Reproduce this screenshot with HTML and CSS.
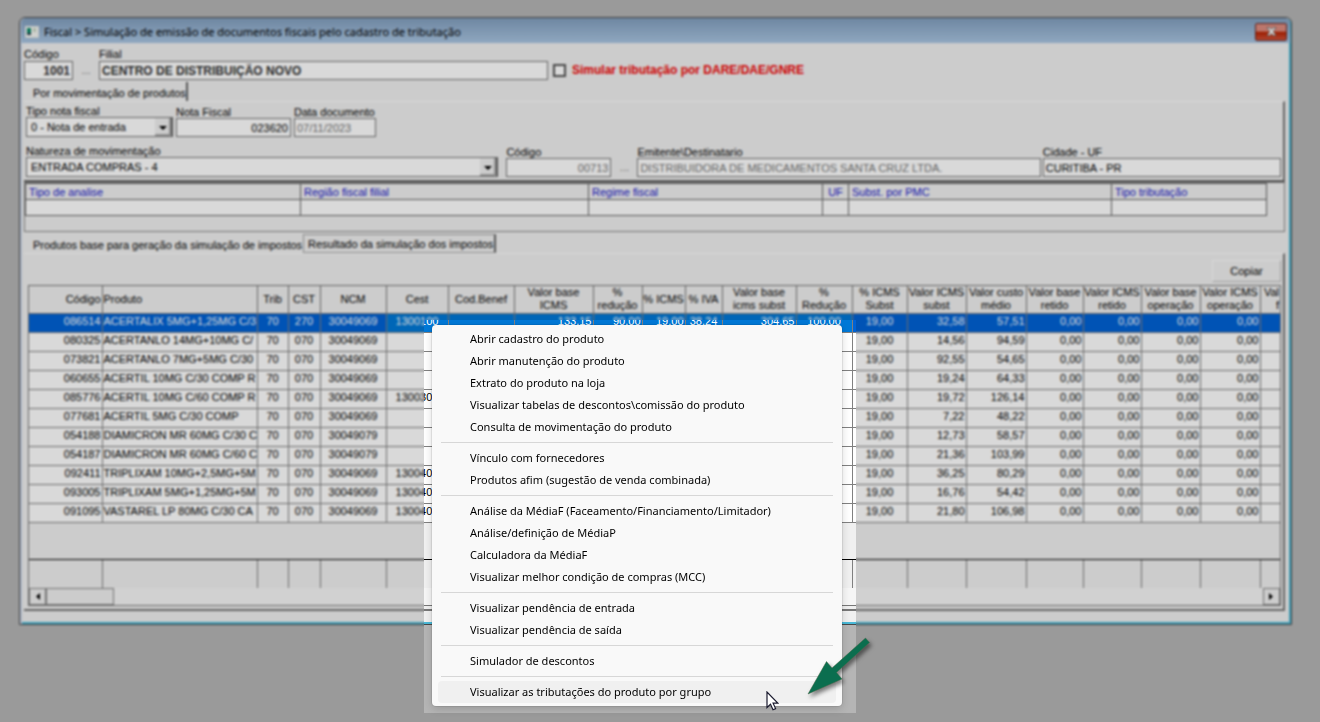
FILE: index.html
```html
<!DOCTYPE html>
<html lang="pt-BR">
<head>
<meta charset="utf-8">
<title>Fiscal - Simulação de emissão de documentos fiscais</title>
<link rel="stylesheet" href="styles.css">
</head>
<body>
<main class="desktop">
  <section class="window">
    <header class="titlebar">
      <svg class="app-icon" width="14" height="12" viewBox="0 0 14 12"><rect x="0" y="0" width="14" height="12" fill="#dfe6e6"/><rect x="1" y="1" width="12" height="10" fill="#f4f6f2"/><rect x="2" y="2" width="4" height="7" fill="#0f8a6a"/><rect x="2" y="7" width="4" height="2" fill="#345"/><rect x="8" y="2" width="3" height="4" fill="#c9d6c4"/></svg>
      <h1 class="title">Fiscal &gt; Simulação de emissão de documentos fiscais pelo cadastro de tributação</h1>
      <button class="close" aria-label="Fechar"><svg width="11" height="9" viewBox="0 0 11 9"><path d="M1 .5h3l1.5 2 1.5-2h3L7.200 4.500 10 8.500H7L5.500 6.500 4 8.500H1l2.800-4z" fill="#fff" stroke="#555" stroke-width=".7"/></svg></button>
    </header>

    <div class="client">
      <div class="branch">
        <div class="field w-code"><label for="cod">Código</label><input id="cod" class="right strong" value="1001" readonly></div>
        <button class="lookup" aria-label="Buscar filial">...</button>
        <div class="field w-branch"><label for="filial">Filial</label><input id="filial" class="strong" value="CENTRO DE DISTRIBUIÇÃO NOVO" readonly></div>
        <label class="check"><input type="checkbox"><span>Simular tributação por DARE/DAE/GNRE</span></label>
      </div>

      <div class="tabs tabs-main"><button class="tab edge">Por movimentação de produtos</button></div>

      <div class="panel">
        <div class="row">
          <div class="field w-type"><label for="tipo">Tipo nota fiscal</label><select id="tipo"><option>0 - Nota de entrada</option></select></div>
          <div class="field w-note"><label for="nota">Nota Fiscal</label><input id="nota" class="right" value="023620" readonly></div>
          <div class="field w-date"><label for="data">Data documento</label><input id="data" class="muted" value="07/11/2023" readonly></div>
        </div>
        <div class="row row-second">
          <div class="field w-nature"><label for="nat">Natureza de movimentação</label><select id="nat"><option>ENTRADA COMPRAS - 4</option></select></div>
          <div class="field w-sender"><label for="cod2">Código</label><input id="cod2" class="right muted" value="00713" readonly></div>
          <button class="lookup" aria-label="Buscar emitente">...</button>
          <div class="field w-issuer"><label for="emi">Emitente\Destinatario</label><input id="emi" class="muted" value="DISTRIBUIDORA DE MEDICAMENTOS SANTA CRUZ LTDA." readonly></div>
          <div class="field w-city"><label for="cid">Cidade - UF</label><input id="cid" value="CURITIBA - PR" readonly></div>
        </div>
      </div>

      <div class="analysis">
        <table class="rules">
          <colgroup><col class="r1"><col class="r2"><col class="r3"><col class="r4"><col class="r5"><col class="r6"></colgroup>
          <thead><tr><th>Tipo de analise</th><th>Região fiscal filial</th><th>Regime fiscal</th><th class="mid">UF</th><th>Subst. por PMC</th><th>Tipo tributação</th></tr></thead>
          <tbody><tr><td></td><td></td><td></td><td></td><td></td><td></td></tr></tbody>
        </table>
      </div>

      <div class="tabs tabs-result">
        <button class="tab">Produtos base para geração da simulação de impostos</button>
        <button class="tab selected">Resultado da simulação dos impostos</button>
      </div>

      <div class="result">
        <button class="copy">Copiar</button>
        <div class="grid">
          <table class="products">
            <colgroup><col class="c73"><col class="c155"><col class="c31"><col class="c32"><col class="c66"><col class="c62"><col class="c66"><col class="c79"><col class="c49"><col class="c43"><col class="c37"><col class="c74"><col class="c56"><col class="c55"><col class="c59"><col class="c60"><col class="c57"><col class="c58"><col class="c59"><col class="c60"><col></colgroup>
            <thead><tr><th class="num">Código</th><th class="txt">Produto</th><th>Trib</th><th>CST</th><th>NCM</th><th>Cest</th><th>Cod.Benef</th><th>Valor base<br>ICMS</th><th>%<br>redução</th><th>% ICMS</th><th>% IVA</th><th>Valor base<br>icms subst</th><th>%<br>Redução</th><th>% ICMS<br>Subst</th><th>Valor ICMS<br>subst</th><th>Valor custo<br>médio</th><th>Valor base<br>retido</th><th>Valor ICMS<br>retido</th><th>Valor base<br>operação</th><th>Valor ICMS<br>operação</th><th class="num">Val<br>f</th></tr></thead>
            <tbody id="rows"></tbody>
          </table>
          <div class="blank"></div>
          <table class="products totals">
            <colgroup><col class="c73"><col class="c155"><col class="c31"><col class="c32"><col class="c66"><col class="c62"><col class="c66"><col class="c79"><col class="c49"><col class="c43"><col class="c37"><col class="c74"><col class="c56"><col class="c55"><col class="c59"><col class="c60"><col class="c57"><col class="c58"><col class="c59"><col class="c60"><col></colgroup>
            <tbody><tr id="totals"></tr></tbody>
          </table>
          <div class="scrollbar">
            <button class="arrow" aria-label="Rolar para a esquerda"><svg width="5" height="7" viewBox="0 0 5 7"><path d="M5 0v7L1 3.500z"/></svg></button>
            <div class="thumb"></div>
            <button class="arrow last" aria-label="Rolar para a direita"><svg width="5" height="7" viewBox="0 0 5 7"><path d="M0 0v7l4-3.500z"/></svg></button>
          </div>
        </div>
      </div>
    </div>
  </section>

  <div class="dim"></div>

  <nav class="menu">
    <button>Abrir cadastro do produto</button>
    <button>Abrir manutenção do produto</button>
    <button>Extrato do produto na loja</button>
    <button>Visualizar tabelas de descontos\comissão do produto</button>
    <button>Consulta de movimentação do produto</button>
    <hr>
    <button>Vínculo com fornecedores</button>
    <button>Produtos afim (sugestão de venda combinada)</button>
    <hr>
    <button>Análise da MédiaF (Faceamento/Financiamento/Limitador)</button>
    <button>Análise/definição de MédiaP</button>
    <button>Calculadora da MédiaF</button>
    <button>Visualizar melhor condição de compras (MCC)</button>
    <hr>
    <button>Visualizar pendência de entrada</button>
    <button>Visualizar pendência de saída</button>
    <hr>
    <button>Simulador de descontos</button>
    <hr>
    <button class="hover">Visualizar as tributações do produto por grupo</button>
  </nav>

  <svg class="pointer" width="13" height="20" viewBox="0 0 13 20"><path d="M1 1v15.500l3.500-3.300 2.500 5.600 2.600-1.200-2.500-5.400h4.700z" fill="#fff" stroke="#1a1a2e" stroke-width="1.200"/></svg>
  <svg class="callout" width="70" height="64" viewBox="0 0 70 64"><path d="M2 58 20.500 25.500 26 32 59.500 2 63.500 6.500 30.500 36.500 36 43z" fill="#0b6e4f" stroke="#4a6b4a" stroke-width=".5"/></svg>
</main>
<script src="app.js"></script>
</body>
</html>
```
FILE: app.js
```js
// code, product, CST, NCM, Cest, valor ICMS subst, custo médio
const data = [
  ["086514", "ACERTALIX 5MG+1,25MG C/3", "270", "30049069", "1300100", "32,58", "57,51"],
  ["080325", "ACERTANLO 14MG+10MG C/", "070", "30049069", "", "14,56", "94,59"],
  ["073821", "ACERTANLO 7MG+5MG C/30", "070", "30049069", "", "92,55", "54,65"],
  ["060655", "ACERTIL 10MG C/30 COMP R", "070", "30049069", "", "19,24", "64,33"],
  ["085776", "ACERTIL 10MG C/60 COMP R", "070", "30049069", "1300300", "19,72", "126,14"],
  ["077681", "ACERTIL 5MG C/30 COMP", "070", "30049069", "", "7,22", "48,22"],
  ["054188", "DIAMICRON MR 60MG C/30 C", "070", "30049079", "", "12,73", "58,57"],
  ["054187", "DIAMICRON MR 60MG C/60 C", "070", "30049079", "", "21,36", "103,99"],
  ["092411", "TRIPLIXAM 10MG+2,5MG+5M", "070", "30049069", "1300400", "36,25", "80,29"],
  ["093005", "TRIPLIXAM 5MG+1,25MG+5M", "070", "30049069", "1300400", "16,76", "54,42"],
  ["091095", "VASTAREL LP 80MG C/30 CA", "070", "30049069", "1300400", "21,80", "106,98"]
];
const body = document.getElementById("rows");
data.forEach((d, i) => {
  const tax = i === 0 ? ["133,15", "90,00", "19,00", "38,24", "304,65", "100,00"] : ["", "", "", "", "", ""];
  const cells = [
    [d[0], "num"], [d[1], "txt"], ["70", ""], [d[2], ""], [d[3], ""], [d[4], ""], ["", ""],
    [tax[0], "num"], [tax[1], "num"], [tax[2], "num"], [tax[3], ""], [tax[4], "num"], [tax[5], ""],
    ["19,00", ""], [d[5], "num"], [d[6], "num"],
    ["0,00", "num"], ["0,00", "num"], ["0,00", "num"], ["0,00", "num"], ["", ""]
  ];
  const tr = document.createElement("tr");
  if (i === 0) tr.className = "active";
  cells.forEach(([text, cls]) => {
    const td = document.createElement("td");
    td.textContent = text;
    if (cls) td.className = cls;
    tr.appendChild(td);
  });
  body.appendChild(tr);
});
const totals = document.getElementById("totals");
for (let i = 0; i < 21; i++) totals.appendChild(document.createElement("td"));
```
FILE: styles.css
```css
* { box-sizing: border-box; }
body { margin: 0; font: 11px/13px "Liberation Sans", Arial, sans-serif; color: #000; background: #b5b5b5; }
button, input, select { font: inherit; color: inherit; margin: 0; border-radius: 0; }
button { padding: 0; border: 0; background: none; }

.desktop { position: relative; min-height: 100vh; padding: 17px 28px 16px 19px; overflow: hidden; }
.window { border: 1px solid #4a4a4a; border-radius: 6px 6px 0 0; background: #f0f0f0; box-shadow: inset 2px 0 0 #c9d4e6, inset -2px -2px 0 #49b9d8; padding: 0 3px 3px 2px; }

.titlebar { display: flex; align-items: center; gap: 5px; height: 25px; margin: 0 -2px 0 -1px; padding: 2px 3px 0 4px; border-radius: 5px 5px 0 0; background: linear-gradient(#829fbe, #a9c5e2); }
.title { flex: 1; margin: 0; font: 11px/16px "Noto Sans", "Open Sans", sans-serif; }
.close { display: flex; align-items: center; justify-content: center; width: 32px; height: 18px; border: 1px solid #6b2a26; border-radius: 2px; background: linear-gradient(#dd8c80 45%, #b82200 50%, #d0543c); }

.client { padding: 5px 3px 10px 2px; }
.branch, .row { display: flex; align-items: flex-end; gap: 2px; }
.field { display: flex; flex-direction: column; min-width: 0; }
.field input { width: 100%; height: 19px; padding: 0 2px; border: 1px solid #777; background: #fff; }
.field label { white-space: nowrap; }
.right { text-align: right; }
.field .strong { font-size: 12px; font-weight: bold; color: #333; }
.field .muted { color: #777; }
.w-code { width: 49px; }
.w-branch { width: 449px; }
.lookup { width: 22px; height: 19px; color: #777; }
.check { display: flex; align-items: center; gap: 6px; height: 19px; margin-left: 3px; font-size: 12px; font-weight: bold; color: #f00000; }
.check input { appearance: none; width: 13px; height: 13px; margin: 0; border: 2px solid #555; background: #fff; }

select { appearance: none; width: 100%; height: 20px; padding: 0 22px 0 4px; border: 1px solid #777; border-right: 2px solid #666; background: #fff url("data:image/svg+xml,%3Csvg xmlns='http://www.w3.org/2000/svg' width='16' height='18'%3E%3Crect width='16' height='18' fill='%23f0f0f0'/%3E%3Cpath d='M0 17h15V0' fill='none' stroke='%23666'/%3E%3Cpath d='M4 8h8l-4 4z'/%3E%3C/svg%3E") no-repeat right center; }

.tabs { display: flex; }
.tabs-main { height: 21px; align-items: flex-end; }
.tab { height: 19px; padding: 3px 0 0 9px; white-space: nowrap; }
.edge { border-right: 2px solid #666; }
.panel { padding: 3px 2px; border-top: 1px solid #fff; border-right: 2px solid #777; border-bottom: 2px solid #666; }
.panel label { line-height: 12px; }
.row { gap: 3px; }
.row-second { margin-top: 8px; gap: 2px; }
.w-type { width: 147px; }
.w-note { width: 115px; }
.w-date { width: 82px; }
.w-nature { flex: 472 1 0; margin-right: 6px; }
.w-sender { width: 105px; }
.w-issuer { flex: 403 1 0; }
.w-city { flex: 238 1 0; }

.analysis { padding: 0 18px 15px 0; border: 1px solid #888; }
table { border-collapse: collapse; table-layout: fixed; width: 100%; }
.rules th, .rules td { height: 16px; padding: 0 3px; border: 1px solid #666; font-weight: normal; line-height: 14px; text-align: left; }
.rules th { color: #1414c8; }
.rules td { background: #fff; }
.rules .mid { text-align: center; }
.r1 { width: 275px; } .r2 { width: 288px; } .r3 { width: 234px; } .r4 { width: 26px; } .r5 { width: 263px; } .r6 { width: 155px; }

.tabs-result { height: 21px; padding-top: 2px; }
.selected { margin-left: 1px; padding: 1px 1px 0 4px; border: 1px dotted #555; border-right: 2px solid #666; }
.result { display: flex; flex-direction: column; padding: 6px 2px 3px 4px; border-top: 1px solid #fff; border-right: 2px solid #777; border-bottom: 2px solid #777; }
.copy { align-self: flex-end; width: 69px; height: 22px; margin-bottom: 3px; border: 1px solid #fff; border-right-color: #bbb; border-bottom-color: #bbb; }
.grid { border: 1px solid #777; overflow: hidden; }
.products th { height: 27px; padding: 0; border-right: 1px solid #777; border-bottom: 1px solid #777; font-weight: normal; white-space: nowrap; overflow: hidden; }
.products td { height: 19px; padding: 0; border-right: 1px solid #808080; border-bottom: 1px solid #808080; background: #fff; text-align: center; vertical-align: top; line-height: 14px; white-space: nowrap; overflow: hidden; }
.products .num { text-align: right; padding-right: 1px; }
.products .txt { text-align: left; padding-left: 1px; }
.products .active td { background: #0062d5; color: #fff; }
.products .active td:nth-child(n+6):nth-child(-n+13) { background: #0078d7; }
.products tr > :last-child { border-right: 0; }
.blank { height: 37px; border-bottom: 1px solid #000; }
.products.totals td { height: 28px; background: #f0f0f0; border-bottom: 0; }
.c31 { width: 31px; } .c32 { width: 32px; } .c37 { width: 37px; } .c43 { width: 43px; } .c49 { width: 49px; }
.c55 { width: 55px; } .c56 { width: 56px; } .c57 { width: 57px; } .c58 { width: 58px; } .c59 { width: 59px; }
.c60 { width: 60px; } .c62 { width: 62px; } .c66 { width: 66px; } .c73 { width: 73px; } .c74 { width: 74px; }
.c79 { width: 79px; } .c155 { width: 155px; }
.scrollbar { display: flex; height: 17px; background: #f6f6f6; }
.arrow { display: flex; align-items: center; justify-content: center; width: 17px; border: 1px solid #888; background: #f0f0f0; }
.last { margin-left: auto; }
.thumb { width: 68px; border: 1px solid #888; background: #f0f0f0; }

/* Dims and softens everything except the area around the context menu. */
.dim { position: absolute; inset: 0; background: rgba(0, 0, 0, .15); backdrop-filter: blur(1px);
  clip-path: polygon(evenodd, 0 0, 100% 0, 100% 100%, 0 100%, 0 0, 424px 320px, 856px 320px, 856px 713px, 424px 713px, 424px 320px); }

.menu { position: absolute; left: 432px; top: 325px; display: flex; flex-direction: column; width: 410px; padding: 3px 6px; border-radius: 4px; background: #f9f9f9; box-shadow: 0 0 0 1px rgba(0, 0, 0, .08), 0 3px 8px rgba(0, 0, 0, .16); font: 11px/16px "Noto Sans", "Open Sans", sans-serif; }
.menu button { height: 22px; padding: 0 32px; border-radius: 4px; text-align: left; white-space: nowrap; }
.menu .hover { background: #f0f0f0; }
.menu hr { width: calc(100% - 6px); height: 1px; margin: 4px 3px; border: 0; background: #d7d7d7; }
.pointer { position: absolute; left: 766px; top: 691px; }
.callout { position: absolute; left: 806px; top: 636px; filter: drop-shadow(2px 3px 2px rgba(0, 0, 0, .5)); }
```
